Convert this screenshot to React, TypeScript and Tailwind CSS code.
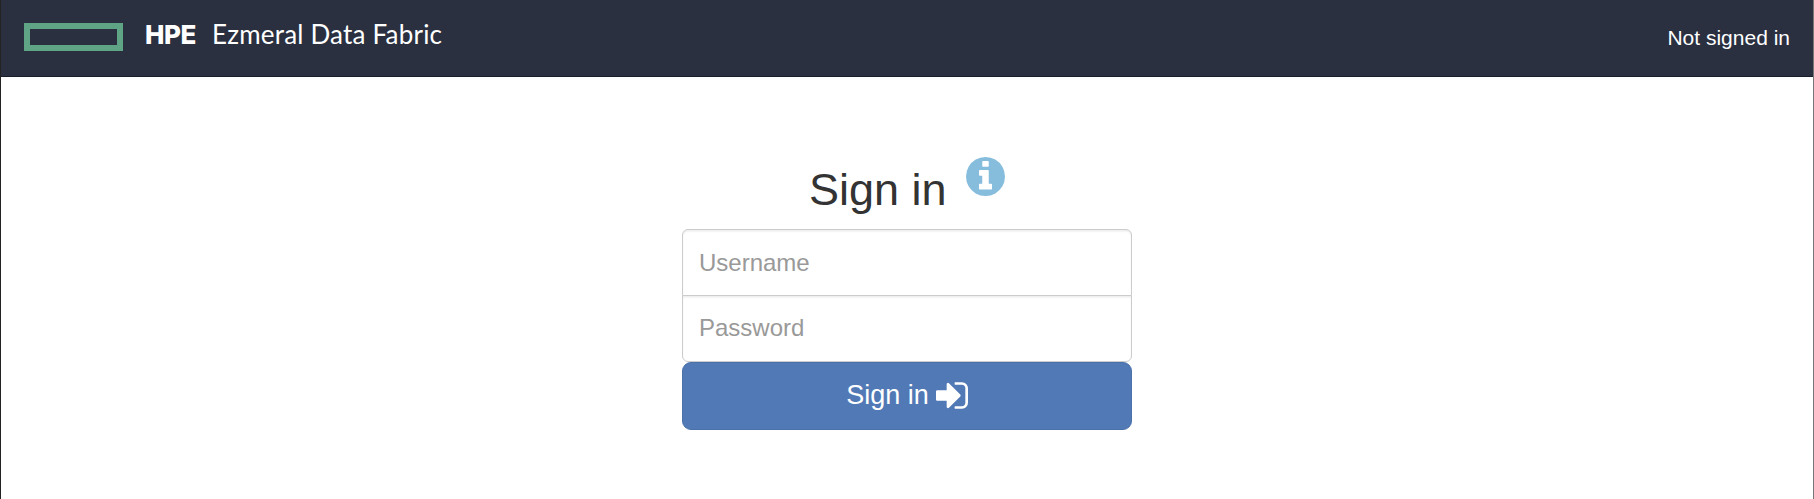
import React from "react";

function InfoIcon() {
  return (
    <svg viewBox="128 128 1536 1536" className="h-[39px] w-[39px] fill-[#86bddd]" aria-hidden="true">
      <path d="M1152 1376v-160q0-14-9-23t-23-9h-96v-512q0-14-9-23t-23-9h-320q-14 0-23 9t-9 23v160q0 14 9 23t23 9h96v320h-96q-14 0-23 9t-9 23v160q0 14 9 23t23 9h448q14 0 23-9t9-23zm-128-896v-160q0-14-9-23t-23-9h-192q-14 0-23 9t-9 23v160q0 14 9 23t23 9h192q14 0 23-9t9-23zm640 416q0 209-103 385.5t-279.5 279.5-385.5 103-385.5-103-279.5-279.5-103-385.5 103-385.5 279.5-279.5 385.5-103 385.5 103 279.5 279.5 103 385.5z" />
    </svg>
  );
}

function SignInIcon() {
  return (
    <svg viewBox="128 256 1536 1280" className="h-[27px] w-8 fill-white" aria-hidden="true">
      <path d="M1312 896q0 26-19 45l-544 544q-19 19-45 19t-45-19-19-45v-288h-448q-26 0-45-19t-19-45v-384q0-26 19-45t45-19h448v-288q0-26 19-45t45-19 45 19l544 544q19 19 19 45zm352-352v704q0 119-84.5 203.5t-203.5 84.5h-320q-13 0-22.5-9.5t-9.5-22.5q0-4-1-20t-.5-26.5 3-23.5 10-19.5 20.5-6.5h320q66 0 113-47t47-113v-704q0-66-47-113t-113-47h-312l-11.5-1-11.5-3-8-5.5-7-9-2-13.5q0-4-1-20t-.5-26.5 3-23.5 10-19.5 20.5-6.5h320q119 0 203.5 84.5t84.5 203.5z" />
    </svg>
  );
}

const field =
  "block w-full border border-[#ccc] bg-white px-4 text-2xl text-[#333] shadow-[inset_0_1.5px_1.5px_rgba(0,0,0,0.075)] outline-none placeholder:text-[#999]";

export default function App() {
  return (
    <div className="flex h-[499px] flex-col border-l border-r border-l-[#232323] border-r-[#777] bg-white font-['Liberation_Sans',Arial,sans-serif]">
      <header className="flex h-[77px] shrink-0 items-start border-b border-[#181d2b] bg-[#2a3040] pl-[23px] pr-[23px] text-white">
        <div className="mt-[23px] h-7 w-[99px] border-[6px] border-[#5fa585]" />
        <div className="ml-[22px] mt-4 flex text-[26px] leading-9">
          <span className="mt-px w-[67px] font-['Inter',sans-serif] font-extrabold tracking-[-0.4px]">HPE</span>
          <span className="whitespace-nowrap font-['Lato',sans-serif] tracking-[0.2px]">Ezmeral Data Fabric</span>
        </div>
        <span className="ml-auto mt-[23px] text-[21px] leading-[30px]">Not signed in</span>
      </header>
      <main className="mx-auto w-[450px] pt-20">
        <div className="flex h-[72px] items-start pl-[127px]">
          <h1 className="mt-2 w-[157px] whitespace-nowrap text-[45px] leading-[50px] text-[#333]">Sign in</h1>
          <InfoIcon />
        </div>
        <form>
          <input className={`${field} h-[67px] rounded-t-[6px]`} placeholder="Username" />
          <input type="password" className={`${field} -mt-px h-[67px] rounded-b-[6px] pb-0.5`} placeholder="Password" />
          <button
            type="button"
            className="flex h-[68px] w-full items-center justify-center gap-[7px] rounded-[9px] border border-[#4a71aa] bg-[#5179b5] pb-0.5 text-[27px] leading-9 text-white"
          >
            <span>Sign in</span>
            <SignInIcon />
          </button>
        </form>
      </main>
    </div>
  );
}
